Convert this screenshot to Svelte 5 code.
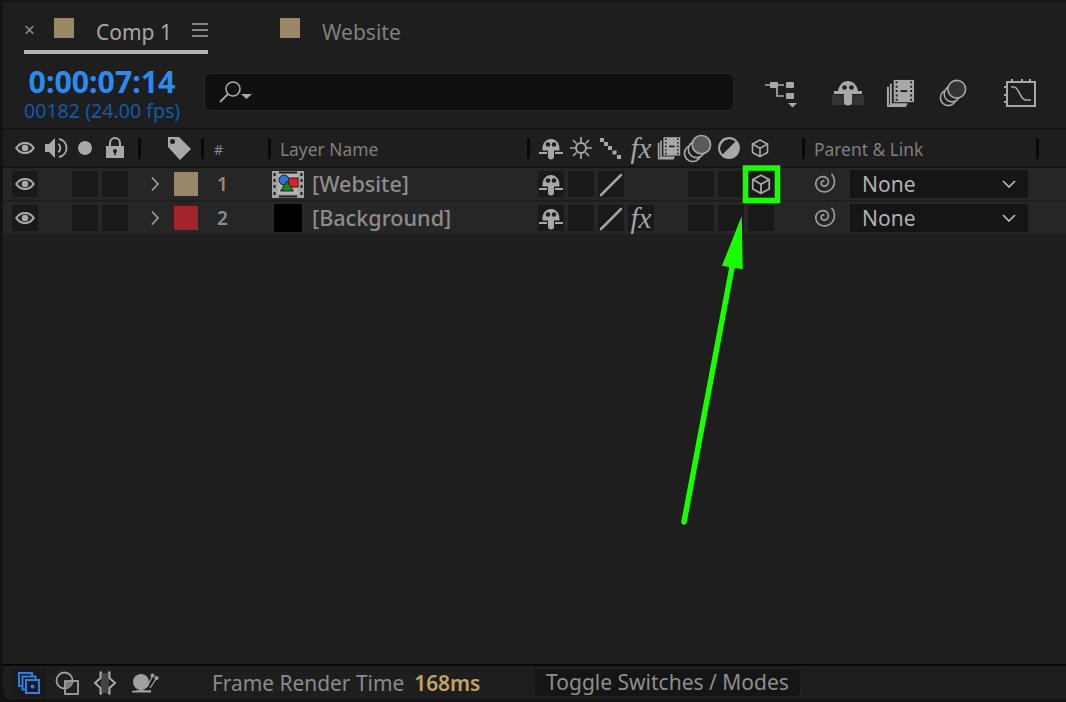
<script lang="ts">
  const layers = [
    { id: 1, name: '[Website]', color: '#9a8768', kind: 'comp', fx: false },
    { id: 2, name: '[Background]', color: '#a4242c', kind: 'solid', fx: true },
  ]
</script>

{#snippet eye()}
  <svg class="ic" width="22" height="16" viewBox="0 0 22 16">
    <path d="M1 8C4 3.500 7 2 11 2s7 1.500 10 6c-3 4.500-6 6-10 6S4 12.500 1 8z" fill="#a8a8a8" />
    <path d="M3.500 8c2-2.500 4.500-3.900 7.500-3.900S16.500 5.500 18.500 8c-2 2.500-4.500 3.900-7.500 3.900S5.500 10.500 3.500 8z" fill="#262626" />
    <circle cx="11" cy="8" r="3.200" fill="#a8a8a8" />
  </svg>
{/snippet}

{#snippet shy()}
  <svg class="ic" width="26" height="26" viewBox="0 0 26 26">
    <path d="M4.500 15.500c-.500-7.500 3.500-11.500 8.500-11.500s9 4 8.500 11.500h-5.500v6a3 3 0 0 1-6 0v-6z" fill="#a8a8a8" />
    <circle cx="10" cy="9.500" r="2.300" fill="#1e1e1e" />
    <circle cx="16" cy="9.500" r="2.300" fill="#1e1e1e" />
    <path d="M1 18h8M17 18h8" stroke="#a8a8a8" stroke-width="1.800" />
  </svg>
{/snippet}

{#snippet fx()}
  <span class="fx">fx</span>
{/snippet}

{#snippet cube(size = 20)}
  <svg class="ic" width={size} height={size} viewBox="0 0 20 20" fill="none" stroke="#a8a8a8" stroke-width="1.600" stroke-linejoin="round">
    <path d="M10 2l7.500 4v8.500L10 18.500l-7.500-4V6z" />
    <path d="M2.500 6L10 10.200 17.500 6M10 10.200v8.300" />
  </svg>
{/snippet}

{#snippet spiral()}
  <svg class="ic" width="24" height="24" viewBox="0 0 24 24" fill="none" stroke="#9a9a9a" stroke-width="1.700" stroke-linecap="round">
    <path d="M19 2.500c3 3.500 3.500 9 .5 13.500-3 3.800-9 5-13 2.500C2.500 16 1.500 10.500 4.500 7c2.800-3 7.500-3.200 9.800-.5 2 2.400 1.300 6-1.300 7.300-2 1-4.300 0-4.800-2-.3-1.500.7-3 2.500-3" />
  </svg>
{/snippet}

{#snippet slash()}
  <svg class="ic" width="26" height="26" viewBox="0 0 26 26">
    <path d="M3 24L23 4" stroke="#a0a0a0" stroke-width="2.600" stroke-linecap="round" />
  </svg>
{/snippet}

{#snippet chevron()}
  <svg class="ic" width="10" height="16" viewBox="0 0 10 16">
    <path d="M2 1.500L8 8l-6 6.500" fill="none" stroke="#a0a0a0" stroke-width="1.600" />
  </svg>
{/snippet}

{#snippet filmStack(width, height)}
  <svg class="ic" {width} {height} viewBox="0 0 30 29">
    <path d="M1 8h2v19h18v2H1z" fill="#a8a8a8" />
    <path d="M4 5h2v20h16v2H4z" fill="#a8a8a8" />
    <rect x="8" y="1" width="21" height="23" fill="#a8a8a8" />
    <path d="M11 2.500v2M11 7v2M11 11.500v2M11 16v2M11 20.500v2M26 2.500v2M26 7v2M26 11.500v2M26 16v2M26 20.500v2" stroke="#1e1e1e" stroke-width="2" />
    <path d="M15 12.500h7" stroke="#1e1e1e" stroke-width="2" />
  </svg>
{/snippet}

{#snippet circles(width, height, fill)}
  <svg class="ic" {width} {height} viewBox="0 0 30 30" fill="none" stroke="#a8a8a8" stroke-width="1.700">
    <circle cx="10" cy="20" r="8.500" />
    <circle cx="14" cy="16" r="8.500" fill="#1e1e1e" />
    <circle cx="19" cy="11" r="9.500" fill={fill} />
  </svg>
{/snippet}

<div class="panel">
  <nav class="tabs">
    <div class="tab active">
      <span class="close">×</span>
      <span class="swatch"></span>
      <span class="tab-name">Comp 1</span>
      <svg class="ic menu" width="16" height="14" viewBox="0 0 16 14">
        <path d="M0 1h16M0 7h16M0 13h16" stroke="#a8a8a8" stroke-width="1.600" />
      </svg>
    </div>
    <div class="tab other">
      <span class="swatch"></span>
      <span class="tab-name dim">Website</span>
    </div>
  </nav>

  <div class="toolbar">
    <div class="timecode">
      <div class="time">0:00:07:14</div>
      <div class="frames">00182 (24.00 fps)</div>
    </div>
    <div class="search">
      <svg class="ic" width="36" height="26" viewBox="0 0 36 26">
        <circle cx="16" cy="10" r="7" fill="none" stroke="#a8a8a8" stroke-width="1.600" />
        <path d="M11 15L3 23" stroke="#a8a8a8" stroke-width="1.800" />
        <path d="M24 15h11l-5.500 5z" fill="#a8a8a8" />
      </svg>
    </div>
    <div class="tools">
      <svg class="ic t-flow" width="34" height="30" viewBox="0 0 34 30">
        <path d="M1 7h12M13 7h7M13 7v11h7" fill="none" stroke="#a8a8a8" stroke-width="1.700" />
        <rect x="6" y="4" width="8" height="6" rx="1" fill="#a8a8a8" />
        <rect x="22" y="4" width="8" height="6" rx="1" fill="#a8a8a8" />
        <rect x="22" y="15" width="8" height="6" rx="1" fill="#a8a8a8" />
        <path d="M24 25h9l-4.500 4.500z" fill="#a8a8a8" />
      </svg>
      <svg class="ic t-shy" width="32" height="28" viewBox="0 0 32 28">
        <rect x="0" y="16" width="32" height="10" fill="#333333" />
        <path d="M2 15v-3h4c1-6 5-10 10-10s9 4 10 10h4v3H20v8a4 3.500 0 0 1-8 0v-8z" fill="#a8a8a8" />
        <circle cx="12.500" cy="8.500" r="2.300" fill="#1e1e1e" />
        <circle cx="19.500" cy="8.500" r="2.300" fill="#1e1e1e" />
      </svg>
      <span class="t-film">{@render filmStack(29, 28)}</span>
      <span class="t-circles">{@render circles(28, 28, '#333333')}</span>
      <svg class="ic t-graph" width="32" height="30" viewBox="0 0 32 30">
        <rect x="3" y="4" width="28" height="24" fill="none" stroke="#a8a8a8" stroke-width="2" />
        <path d="M8 1v3M18 1v3M26 1v3M0 9h3M0 17h3M0 24h3" stroke="#a8a8a8" stroke-width="2" />
        <path d="M7 9h3c5 0 6 13 12 13h5" fill="none" stroke="#a8a8a8" stroke-width="1.600" />
      </svg>
    </div>
  </div>

  <div class="grid header">
    <div class="col av">
      {@render eye()}
      <svg class="ic speaker" width="24" height="24" viewBox="0 0 24 24">
        <path d="M1 8h4l6-6v20l-6-6H1z" fill="#a8a8a8" />
        <path d="M14 8c3 1 3 7 0 8M15 3c10 2 10 16 0 18" fill="none" stroke="#a8a8a8" stroke-width="1.800" />
      </svg>
      <span class="dot"></span>
      <svg class="ic lock" width="18" height="22" viewBox="0 0 18 22">
        <path d="M4 9V6a5 5 0 0 1 10 0v3" fill="none" stroke="#a8a8a8" stroke-width="2" />
        <path d="M0 9h18v12H0z" fill="#a8a8a8" />
        <circle cx="9" cy="14" r="2" fill="#1e1e1e" />
        <path d="M9 14v4" stroke="#1e1e1e" stroke-width="1.600" />
      </svg>
    </div>
    <div class="col lab sep">
      <svg class="ic tag" width="25" height="25" viewBox="0 0 25 25">
        <path d="M1 1h11l12 12-11 11L1 11z" fill="#a8a8a8" />
        <circle cx="5.500" cy="5.500" r="2.500" fill="#1e1e1e" />
      </svg>
    </div>
    <div class="col num sep"><span class="hash">#</span></div>
    <div class="col name sep"><span class="head-text">Layer Name</span></div>
    <div class="col sw sep">
      <span class="h-shy">{@render shy()}</span>
      <svg class="ic h-sun" width="22" height="22" viewBox="0 0 22 22">
        <circle cx="11" cy="11" r="5" fill="none" stroke="#a8a8a8" stroke-width="2" />
        <path d="M11 0v5M11 17v5M0 11h5M17 11h5M3 3l3.500 3.500M15.500 15.500L19 19M19 3l-3.500 3.500M6.500 15.500L3 19" stroke="#a8a8a8" stroke-width="1.700" />
      </svg>
      <svg class="ic h-blur" width="21" height="21" viewBox="0 0 21 21" fill="#a8a8a8">
        <rect x="0" y="0" width="4" height="4" />
        <rect x="4" y="4" width="4" height="4" />
        <rect x="8" y="8" width="4" height="4" />
        <rect x="12.500" y="12.500" width="4" height="4" />
        <rect x="17" y="17" width="4" height="4" />
      </svg>
      <span class="h-fx">{@render fx()}</span>
      <span class="h-film">{@render filmStack(24, 24)}</span>
      <span class="h-circles">{@render circles(29, 29, '#5a5a5a')}</span>
      <svg class="ic h-half" width="22" height="22" viewBox="0 0 22 22">
        <circle cx="11" cy="11" r="10" fill="#a8a8a8" />
        <path d="M4 18A10 10 0 0 1 18 4z" fill="#1e1e1e" />
        <circle cx="11" cy="11" r="10" fill="none" stroke="#a8a8a8" stroke-width="1.800" />
      </svg>
      <span class="h-cube">{@render cube(20)}</span>
    </div>
    <div class="col parent sep"><span class="head-text">Parent &amp; Link</span></div>
    <div class="col end sep"></div>
  </div>

  {#each layers as layer}
    <div class="grid row">
      <div class="col av">
        <span class="cell">{@render eye()}</span>
        <span class="cell push"></span>
        <span class="cell"></span>
      </div>
      <div class="col lab">
        <span class="chev">{@render chevron()}</span>
        <span class="label-color" style="background: {layer.color}"></span>
      </div>
      <div class="col num"><span class="index">{layer.id}</span></div>
      <div class="col name">
        {#if layer.kind === 'comp'}
          <svg class="ic source" width="32" height="27" viewBox="0 0 32 27">
            <rect width="32" height="27" fill="#a3a3a3" />
            <path d="M2.500 2v3M2.500 8v3M2.500 14v3M2.500 21v3M29.500 2v3M29.500 8v3M29.500 14v3M29.500 21v3M7 1.500h18M7 25.500h18" stroke="#1e1e1e" stroke-width="2" />
            <rect x="6" y="3" width="20" height="20" fill="#b4b4b4" />
            <rect x="16" y="7" width="10" height="9" fill="#e31e25" stroke="#222" />
            <circle cx="12" cy="9" r="5" fill="#2a74d8" stroke="#222" />
            <path d="M15 10l6.500 10H8.500z" fill="#168a1a" stroke="#222" />
          </svg>
        {:else}
          <span class="source solid"></span>
        {/if}
        <span class="layer-name">{layer.name}</span>
      </div>
      <div class="col sw switches">
        <span class="cell">{@render shy()}</span>
        <span class="cell"></span>
        <span class="cell">{@render slash()}</span>
        {#if layer.fx}
          <span class="cell">{@render fx()}</span>
        {:else}
          <span class="blank"></span>
        {/if}
        <span class="cell push"></span>
        <span class="cell"></span>
        <span class="cell">{#if layer.id === 1}{@render cube(22)}{/if}</span>
      </div>
      <div class="col parent link">
        {@render spiral()}
        <div class="select">
          <span>None</span>
          <svg class="ic" width="14" height="8" viewBox="0 0 14 8">
            <path d="M1 1l6 6 6-6" fill="none" stroke="#b8b8b8" stroke-width="1.700" />
          </svg>
        </div>
      </div>
    </div>
  {/each}

  <div class="spacer"></div>

  <footer class="footer">
    <div class="foot-icons">
      <span class="foot-active">
        <svg class="ic" width="24" height="24" viewBox="0 0 24 24" fill="none" stroke="#2c7fe8" stroke-width="2">
          <rect x="2" y="2" width="13" height="13" />
          <rect x="5.500" y="5.500" width="13" height="13" fill="#1a1a1a" />
          <rect x="9" y="9" width="13" height="13" fill="#1a1a1a" />
          <circle cx="15.500" cy="15.500" r="2" fill="#2c7fe8" stroke="none" />
        </svg>
      </span>
      <svg class="ic" width="24" height="24" viewBox="0 0 24 24">
        <circle cx="9.500" cy="9.500" r="8" fill="none" stroke="#a0a0a0" stroke-width="1.800" />
        <path d="M10 10h7.500A8 8 0 0 1 10 17.500z" fill="#7a7a7a" />
        <rect x="10" y="10" width="13" height="13" fill="none" stroke="#a0a0a0" stroke-width="1.800" />
      </svg>
      <svg class="ic" width="24" height="24" viewBox="0 0 24 24">
        <rect x="8" y="2" width="8" height="20" fill="#444444" />
        <path d="M9 1.500H7.500V7L2 12l5.500 5v5.500H9M15 1.500h1.500V7L22 12l-5.500 5v5.500H15" fill="none" stroke="#a8a8a8" stroke-width="2" />
      </svg>
      <svg class="ic" width="28" height="22" viewBox="0 0 28 22">
        <circle cx="10" cy="10" r="8" fill="#a0a0a0" />
        <path d="M1 19c3 0 4-1 9-1s6 1 10 0v2.500H1z" fill="#a0a0a0" />
        <path d="M16 15l5-10M19 16l6-9" stroke="#a0a0a0" stroke-width="1.300" />
        <circle cx="21.500" cy="3.500" r="2" fill="#a0a0a0" />
        <circle cx="25.500" cy="6" r="2" fill="#a0a0a0" />
      </svg>
    </div>
    <div class="render">
      <span class="render-label">Frame Render Time</span>
      <span class="render-value">168ms</span>
    </div>
    <button class="toggle">Toggle Switches / Modes</button>
  </footer>

  <svg class="annotation" width="1066" height="702" viewBox="0 0 1066 702">
    <rect x="745.500" y="168" width="32" height="32.500" fill="none" stroke="#1aff00" stroke-width="5.500" />
    <path d="M684 522L733 262" stroke="#1aff00" stroke-width="5.500" stroke-linecap="round" />
    <path d="M741.700 216L722 265.700l20.700 3.600z" fill="#1aff00" />
  </svg>
</div>

<style>
  :global(body) {
    background: #131313;
  }

  .panel {
    position: relative;
    width: 1066px;
    height: 702px;
    box-sizing: border-box;
    display: flex;
    flex-direction: column;
    background: #1e1e1e;
    border-top: 2px solid #131313;
    border-left: 3px solid #131313;
    border-bottom: 2px solid #131313;
    border-bottom-left-radius: 12px;
    font-family: "Noto Sans", sans-serif;
  }

  .ic {
    display: block;
    flex-shrink: 0;
  }

  .tabs {
    display: flex;
    height: 52px;
    flex-shrink: 0;
    padding-left: 21px;
    box-sizing: border-box;
  }

  .tab {
    display: flex;
    align-items: center;
    height: 52px;
    box-sizing: border-box;
    padding-top: 4px;
  }

  .tab.active {
    width: 184px;
    border-bottom: 4px solid #b4b4b4;
  }

  .tab.other {
    margin-left: 72px;
    padding-bottom: 4px;
  }

  .close {
    font-size: 19px;
    color: #8c8c8c;
    width: 30px;
    line-height: 1;
    margin-top: 4px;
  }

  .swatch {
    width: 20px;
    height: 20px;
    background: #9a8768;
  }

  .tab-name {
    font-size: 21px;
    color: #a6a6a6;
    margin-left: 22px;
    margin-top: 8px;
  }

  .tab-name.dim {
    color: #7e7e7e;
  }

  .menu {
    margin-left: 20px;
    margin-top: 4px;
  }

  .toolbar {
    display: flex;
    align-items: flex-start;
    height: 76px;
    flex-shrink: 0;
    border-bottom: 2px solid #151515;
    box-sizing: border-box;
  }

  .timecode {
    width: 201px;
    flex-shrink: 0;
    padding-left: 21px;
    box-sizing: border-box;
    margin-top: 11px;
  }

  .time {
    width: 156px;
    text-align: center;
    font-size: 30.300px;
    line-height: 34px;
    font-weight: 700;
    color: #2b8af0;
    white-space: nowrap;
  }

  .frames {
    font-size: 19.600px;
    line-height: 24px;
    color: #0f5ba8;
    white-space: nowrap;
  }

  .search {
    width: 530px;
    height: 38px;
    margin-top: 19px;
    flex-shrink: 0;
    box-sizing: border-box;
    display: flex;
    align-items: center;
    padding-left: 12px;
    background: #101010;
    border: 1px solid #262626;
    border-radius: 6px;
  }

  .tools {
    display: flex;
    align-items: center;
    height: 30px;
    margin-top: 24px;
    padding-left: 30px;
  }

  .t-shy {
    margin-left: 34px;
  }

  .t-film {
    margin-left: 22px;
  }

  .t-circles {
    margin-left: 24px;
  }

  .t-graph {
    margin-left: 37px;
  }

  .grid {
    display: grid;
    grid-template-columns: 135px 63px 67px 259px 275px 234px 1fr;
    flex-shrink: 0;
    padding-left: 1px;
  }

  .col {
    display: flex;
    align-items: center;
    min-width: 0;
  }

  .header {
    height: 38px;
    border-bottom: 2px solid #151515;
    box-sizing: border-box;
  }

  .sep::before {
    content: '';
    width: 3px;
    height: 21px;
    margin-left: -1px;
    background: #0a0a0a;
    flex-shrink: 0;
  }

  .header .av {
    padding-left: 10px;
  }

  .speaker {
    margin-left: 8px;
  }

  .dot {
    width: 14px;
    height: 14px;
    border-radius: 50%;
    background: #a8a8a8;
    margin-left: 10px;
  }

  .lock {
    margin-left: 14px;
  }

  .tag {
    margin-left: 26px;
  }

  .hash {
    margin-left: 10px;
    font-size: 14px;
    color: #8a8a8a;
    margin-top: 2px;
  }

  .head-text {
    margin-left: 9px;
    font-size: 17.400px;
    color: #7e7e7e;
    white-space: nowrap;
    margin-top: 2px;
  }

  .h-shy {
    margin-left: 8px;
  }

  .h-sun {
    margin-left: 6px;
  }

  .h-blur {
    margin-left: 8px;
  }

  .h-fx {
    margin-left: 8px;
  }

  .h-film {
    margin-left: 4px;
  }

  .h-circles {
    margin-left: 2px;
  }

  .h-half {
    margin-left: 6px;
  }

  .h-cube {
    margin-left: 10px;
  }

  .fx {
    display: block;
    font-family: "Liberation Serif", serif;
    font-style: italic;
    font-size: 29px;
    line-height: 26px;
    color: #a4a4a4;
    width: 24px;
    text-align: center;
    white-space: nowrap;
  }

  .row {
    height: 32px;
    margin-bottom: 2px;
    background: #262626;
    grid-template-columns: 135px 63px 67px 259px 275px 1fr;
    box-sizing: border-box;
  }

  .cell {
    width: 26px;
    height: 26px;
    flex-shrink: 0;
    background: #191919;
    display: flex;
    align-items: center;
    justify-content: center;
  }

  .row .av {
    padding-left: 8px;
    gap: 4px;
  }

  .row .av .push {
    margin-left: 30px;
  }

  .chev {
    margin-left: 11px;
  }

  .label-color {
    width: 24px;
    height: 24px;
    margin-left: 14px;
  }

  .index {
    margin-left: 15px;
    font-size: 19px;
    font-weight: 600;
    color: #8c8c8c;
  }

  .source {
    margin-left: 3px;
  }

  .source.solid {
    width: 28px;
    height: 28px;
    margin-left: 5px;
    margin-right: 2px;
    background: #000;
  }

  .layer-name {
    margin-left: 8px;
    margin-bottom: 2px;
    font-size: 21.600px;
    font-weight: 500;
    color: #8c8c8c;
    white-space: nowrap;
  }

  .switches {
    padding-left: 10px;
    gap: 4px;
  }

  .blank {
    width: 26px;
  }

  .switches .push {
    margin-left: 30px;
  }

  .link {
    padding-left: 10px;
    gap: 13px;
  }

  .select {
    width: 178px;
    height: 28px;
    box-sizing: border-box;
    display: flex;
    align-items: center;
    justify-content: space-between;
    padding: 0 12px;
    background: #151515;
    font-size: 21px;
    color: #b0b0b0;
  }

  .spacer {
    flex: 1;
  }

  .footer {
    display: flex;
    align-items: center;
    height: 36px;
    flex-shrink: 0;
    border-top: 2px solid #080808;
    border-bottom: 1px solid #141414;
    box-sizing: border-box;
  }

  .foot-icons {
    display: flex;
    align-items: center;
    gap: 14px;
    width: 209px;
    padding-left: 9px;
    box-sizing: border-box;
    flex-shrink: 0;
  }

  .foot-active {
    display: flex;
    align-items: center;
    justify-content: center;
    width: 34px;
    height: 30px;
    margin-right: -5px;
    background: #1a1a1a;
  }

  .render {
    display: flex;
    align-items: baseline;
    gap: 10px;
    width: 322px;
    flex-shrink: 0;
    font-size: 20.900px;
  }

  .render-label {
    color: #8a8a8a;
  }

  .render-value {
    font-weight: 600;
    color: #bfa55f;
  }

  .toggle {
    width: 267px;
    height: 29px;
    padding: 0;
    background: #151515;
    border: 1px solid #222;
    border-radius: 3px;
    font-family: inherit;
    font-size: 21px;
    line-height: 1;
    color: #8e8e8e;
    white-space: nowrap;
  }

  .annotation {
    position: absolute;
    left: -3px;
    top: -2px;
    pointer-events: none;
  }
</style>
